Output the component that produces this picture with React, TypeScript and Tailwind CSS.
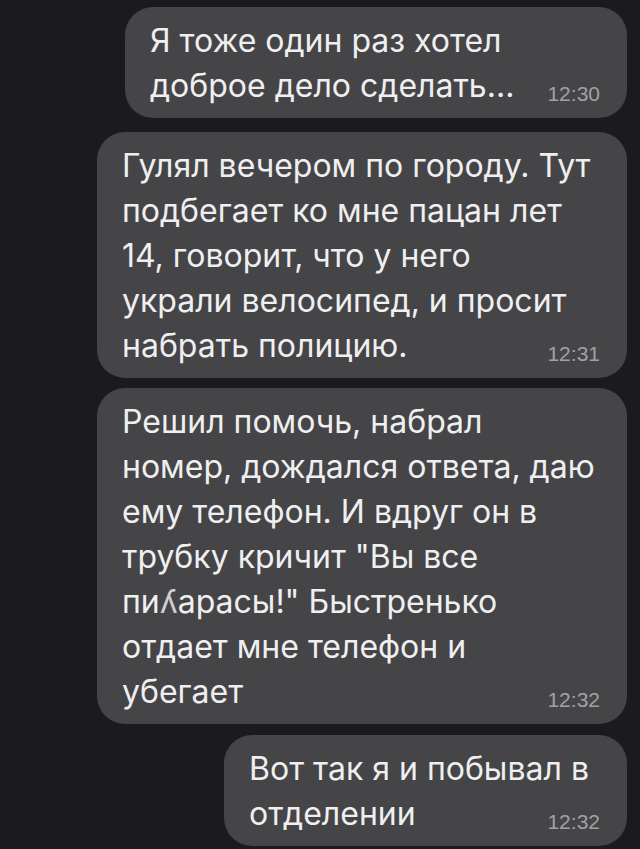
import React from 'react';

type Msg = {
  lines: React.ReactNode[];
  time: string;
  width: string;
  gap: string;
};

const messages: Msg[] = [
  {
    lines: ['Я тоже один раз хотел', 'доброе дело сделать...'],
    time: '12:30',
    width: 'w-[502px]',
    gap: 'mt-0',
  },
  {
    lines: [
      'Гулял вечером по городу. Тут',
      'подбегает ко мне пацан лет',
      '14, говорит, что у него',
      'украли велосипед, и просит',
      'набрать полицию.',
    ],
    time: '12:31',
    width: 'w-[530px]',
    gap: 'mt-[14px]',
  },
  {
    lines: [
      'Решил помочь, набрал',
      'номер, дождался ответа, даю',
      'ему телефон. И вдруг он в',
      'трубку кричит "Вы все',
      <>
        пи<span className="text-[#cfcfd1]">ʎ</span>арасы!" Быстренько
      </>,
      'отдает мне телефон и',
      'убегает',
    ],
    time: '12:32',
    width: 'w-[530px]',
    gap: 'mt-[10px]',
  },
  {
    lines: ['Вот так я и побывал в', 'отделении'],
    time: '12:32',
    width: 'w-[403px]',
    gap: 'mt-[11px]',
  },
];

function Bubble({ msg }: { msg: Msg }) {
  return (
    <div
      className={`relative ${msg.width} ${msg.gap} rounded-[28px] bg-[#454547] pl-[25px] pr-[27px] pt-[11px] pb-[10px]`}
    >
      <p
        className="whitespace-nowrap text-[32px] leading-[45px] text-[#efeff1]"
        style={{ fontFamily: 'Inter, "Liberation Sans", sans-serif' }}
      >
        {msg.lines.map((line, i) => (
          <React.Fragment key={i}>
            {line}
            {i < msg.lines.length - 1 && <br />}
          </React.Fragment>
        ))}
      </p>
      <span className="absolute bottom-[14px] right-[27px] text-[21px] leading-none text-[#a1a1a4]">
        {msg.time}
      </span>
    </div>
  );
}

export default function App() {
  return (
    <div
      className="min-h-screen w-full overflow-hidden bg-[#1b1b1d] pt-[7px] pr-[13px] flex flex-col items-end"
      style={{ fontFamily: '"Liberation Sans", Arial, sans-serif' }}
    >
      {messages.map((m, i) => (
        <Bubble key={i} msg={m} />
      ))}
    </div>
  );
}
